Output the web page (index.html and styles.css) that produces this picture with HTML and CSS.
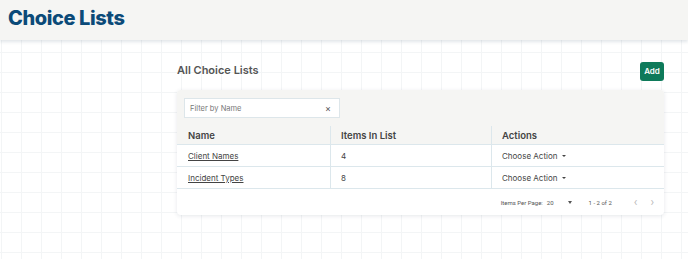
FILE: index.html
```html
<!DOCTYPE html>
<html lang="en">

<head>
    <meta charset="UTF-8">
    <meta name="viewport" content="width=device-width, initial-scale=1.0">
    <title>Choice Lists</title>
    <link rel="stylesheet" href="styles.css">
</head>

<body>
    <div class="page-header">
        <h1>Choice Lists</h1>
    </div>
    <div class="content">
        <div class="title-row">
            <h2>All Choice Lists</h2>
            <button class="add-button">Add</button>
        </div>
        <div class="card">
            <div class="filter-bar">
                <div class="filter-input">
                    <span class="placeholder">Filter by Name</span>
                    <span class="clear">&#215;</span>
                </div>
            </div>
            <table class="lists-table">
                <thead>
                    <tr>
                        <th class="col-name">Name</th>
                        <th class="col-count">Items In List</th>
                        <th>Actions</th>
                    </tr>
                </thead>
                <tbody>
                    <tr>
                        <td><a href="#">Client Names</a></td>
                        <td>4</td>
                        <td class="action">Choose Action <span class="caret"></span></td>
                    </tr>
                    <tr>
                        <td><a href="#">Incident Types</a></td>
                        <td>8</td>
                        <td class="action">Choose Action <span class="caret"></span></td>
                    </tr>
                </tbody>
            </table>
            <div class="pager">
                <span class="per-page">Items Per Page:</span>
                <span class="page-size">20</span>
                <span class="caret small"></span>
                <span class="range">1 - 2 of 2</span>
                <span class="nav prev">&#8249;</span>
                <span class="nav">&#8250;</span>
            </div>
        </div>
    </div>
</body>

</html>
```

FILE: styles.css
```css
body {
    font-family: "Inter", "Noto Sans", sans-serif;
    margin: 0;
    padding: 0;
    height: 259px;
    overflow: hidden;
    background-color: #fff;
    background-image:
        linear-gradient(to right, #f3f5f6 1px, transparent 1px),
        linear-gradient(to bottom, #f3f5f6 1px, transparent 1px);
    background-size: 20px 20px;
    background-position: 1px 12px;
}

.page-header {
    height: 40px;
    background-color: #f5f5f3;
    box-shadow: 0 2px 3px rgba(60, 90, 110, 0.15);
    padding-left: 8px;
    display: flex;
    align-items: center;
}

.page-header h1 {
    margin: 0;
    font-size: 20px;
    font-weight: 800;
    color: #0b4a78;
    letter-spacing: -0.4px;
    margin-top: -4px;
}

.content {
    padding: 21px 24px 0 177px;
}

.title-row {
    display: flex;
    justify-content: space-between;
    align-items: center;
    height: 20px;
    margin-bottom: 9px;
}

.title-row h2 {
    margin: 0;
    margin-top: -3px;
    font-size: 11px;
    font-weight: 600;
    color: #555;
}

.add-button {
    background-color: #0e7a5a;
    color: #fff;
    border: none;
    border-radius: 3px;
    height: 19px;
    width: 24px;
    padding: 0;
    font-family: inherit;
    font-size: 8px;
    font-weight: 600;
}

.card {
    background-color: #fff;
    border-radius: 4px;
    box-shadow: 0 1px 4px rgba(40, 60, 80, 0.12);
    overflow: hidden;
}

.filter-bar {
    background-color: #f5f5f3;
    padding: 8px 7px;
    height: 20px;
}

.filter-input {
    width: 141px;
    height: 18px;
    background-color: #fff;
    border: 1px solid #dde6ea;
    display: flex;
    align-items: center;
    justify-content: space-between;
    padding: 0 8px 0 5px;
}

.placeholder {
    font-size: 7.5px;
    color: #777;
}

.clear {
    font-size: 9px;
    color: #555;
}

.lists-table {
    width: 100%;
    border-collapse: collapse;
}

.lists-table th,
.lists-table td {
    border: 1px solid #dce7ec;
    text-align: left;
    padding: 0 10px;
}

.lists-table tr > :first-child {
    border-left: none;
    padding-left: 11px;
}

.lists-table tr > :last-child {
    border-right: none;
}

.lists-table th {
    background-color: #f5f5f3;
    height: 18px;
    font-size: 9.5px;
    font-weight: 600;
    color: #444;
    border-top: none;
}

.lists-table td {
    height: 21px;
    font-size: 8px;
    color: #444;
}

.col-name {
    width: 132px;
}

.col-count {
    width: 140px;
}

.lists-table a {
    color: #444;
}

.caret {
    display: inline-block;
    border-left: 2px solid transparent;
    border-right: 2px solid transparent;
    border-top: 2px solid #444;
    vertical-align: middle;
    margin-left: 2px;
}

.pager {
    height: 26px;
    display: flex;
    align-items: center;
    justify-content: flex-end;
    padding-right: 10px;
    font-family: "Roboto", sans-serif;
    font-size: 6px;
    color: #555;
}

.page-size {
    margin-left: 4px;
}

.caret.small {
    margin-left: 14px;
    border-left-width: 2.5px;
    border-right-width: 2.5px;
    border-top-width: 3px;
    border-top-color: #555;
}

.range {
    margin-left: 17px;
}

.nav {
    font-size: 12px;
    color: #bbb;
    margin-left: 13px;
}

.nav.prev {
    margin-left: 22px;
}
```
